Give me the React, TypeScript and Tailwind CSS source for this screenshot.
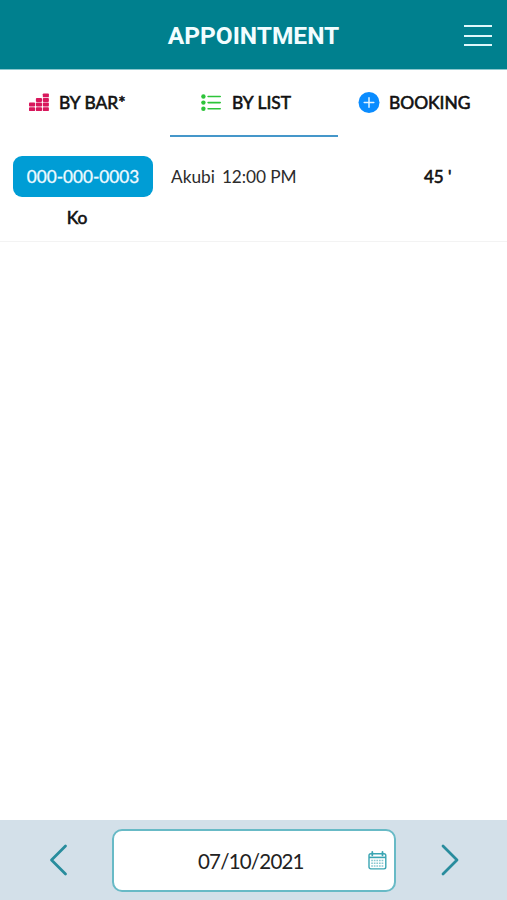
import type { ReactNode } from "react";

function BarsIcon() {
  const columns = [
    { x: 0, rows: 2 },
    { x: 6.9, rows: 3 },
    { x: 13.8, rows: 4 },
  ];
  return (
    <svg width="20" height="19" viewBox="0 0 20 19" fill="#d8175c">
      {columns.map((c) =>
        Array.from({ length: c.rows }, (_, row) => (
          <rect key={`${c.x}-${row}`} x={c.x} y={14.2 - row * 4.6} width="6.1" height="3.9" rx="0.9" />
        )),
      )}
    </svg>
  );
}

function ListIcon() {
  return (
    <svg width="20" height="18" viewBox="0 0 20 18" fill="#2dc43a">
      {[2.5, 8.6, 14.7].map((y) => (
        <g key={y}>
          <circle cx="2.4" cy={y} r="2.2" />
          <rect x="6.3" y={y - 0.8} width="13.7" height="1.6" rx="0.8" />
        </g>
      ))}
    </svg>
  );
}

function PlusIcon() {
  return (
    <svg width="22" height="22" viewBox="0 0 22 22">
      <circle cx="11" cy="10.5" r="10.5" fill="#0a8cff" />
      <path d="M11 5.7v9.6M6.2 10.5h9.6" stroke="#e4f4ff" strokeWidth="1.5" strokeLinecap="round" />
    </svg>
  );
}

function CalendarIcon() {
  return (
    <svg width="19" height="19" viewBox="0 0 19 19" fill="none" stroke="#3aa5b3">
      <rect x="1" y="2.7" width="16.8" height="15.2" rx="1.8" strokeWidth="1.4" />
      <path d="M1 6.4h16.8" strokeWidth="1.6" />
      <path d="M4.3 0.9v3.4M14.5 0.9v3.4" strokeWidth="1.8" strokeLinecap="round" />
      <path d="M3.2 9.6h12.6M3.2 12.3h12.6M3.2 15h12.6" strokeWidth="1.5" strokeDasharray="1.7 0.9" opacity="0.6" />
    </svg>
  );
}

function Chevron({ path }: { path: string }) {
  return (
    <svg width="20" height="34" viewBox="0 0 20 34" fill="none" stroke="#288c9d" strokeWidth="2.8" strokeLinecap="round" strokeLinejoin="round">
      <path d={path} />
    </svg>
  );
}

function Tab({ icon, label, className, active = false }: { icon: ReactNode; label: ReactNode; className: string; active?: boolean }) {
  return (
    <button className={`flex h-[67px] items-center border-b-2 ${active ? "border-[#4597ca]" : "border-transparent"} ${className}`}>
      {icon}
      {label}
    </button>
  );
}

const tabText = "whitespace-nowrap pt-px text-[17.4px] leading-6 text-[#111] [-webkit-text-stroke:0.6px_#111]";

export default function App() {
  return (
    <div className="flex h-[900px] w-[507px] flex-col overflow-hidden bg-white font-['Lato',sans-serif] text-[#111]">
      <header className="grid h-[70px] shrink-0 grid-cols-[1fr_auto_1fr] items-center border-b border-[#8cc8ce] bg-[#00808e] pr-[15px]">
        <h1 className="col-start-2 ml-[15px] pt-[3px] font-['Roboto',sans-serif] text-[24.5px] leading-7 font-bold text-[#f2fdff]">APPOINTMENT</h1>
        <button aria-label="Menu" className="flex flex-col gap-[7.5px] justify-self-end pt-0.5">
          <span className="h-0.5 w-7 bg-[#dff8fb]" />
          <span className="h-0.5 w-7 bg-[#dff8fb]" />
          <span className="h-0.5 w-7 bg-[#dff8fb]" />
        </button>
      </header>

      <nav className="grid shrink-0 grid-cols-[170px_168px_169px]">
        <Tab className="pl-[29px]" icon={<BarsIcon />} label={<span className={`${tabText} ml-2.5`}>BY BAR*</span>} />
        <Tab active className="pl-[31px]" icon={<ListIcon />} label={<span className={`${tabText} ml-[11px]`}>BY LIST</span>} />
        <Tab className="pl-5" icon={<PlusIcon />} label={<span className={`${tabText} ml-[9px]`}>BOOKING</span>} />
      </nav>

      <main className="flex-1">
        <div className="flex h-[105px] items-start border-b border-[#f3f3f3] pt-[19px] pl-[13px]">
          <div className="flex w-[140px] flex-col">
            <span className="flex h-[41px] items-center justify-center rounded-[9px] bg-[#009dd5] pt-px text-[17.2px] whitespace-nowrap text-[#effaff] [-webkit-text-stroke:0.3px_#effaff]">000-000-0003</span>
            <span className="mt-[9px] pr-3 text-center text-[17.4px] leading-6 [-webkit-text-stroke:0.6px_#111]">Ko</span>
          </div>
          <div className="ml-[18px] flex h-[41px] w-[253px] items-center gap-[7px] pt-px text-[17.3px] whitespace-nowrap text-[#2c2c2c]">
            <span>Akubi</span>
            <span className="tracking-[-0.1px]">12:00 PM</span>
          </div>
          <span className="flex h-[41px] items-center pt-px text-[17px] whitespace-nowrap [-webkit-text-stroke:0.6px_#111]">45 '</span>
        </div>
      </main>

      <footer className="flex h-20 shrink-0 items-center bg-[#d3e0e9] pl-[49px]">
        <button aria-label="Previous day">
          <Chevron path="M16.5 3L2.5 17L16.5 31" />
        </button>
        <div className="ml-[43px] flex h-[63px] w-[284px] items-center rounded-[10px] border-2 border-[#68bac6] bg-white">
          <span className="ml-[84px] w-[112px] pt-px text-[20.5px] leading-7 tracking-[-0.8px] whitespace-nowrap text-[#222]">07/10/2021</span>
          <span className="ml-[58px]"><CalendarIcon /></span>
        </div>
        <button aria-label="Next day" className="ml-11">
          <Chevron path="M3 3L17 17L3 31" />
        </button>
      </footer>
    </div>
  );
}
